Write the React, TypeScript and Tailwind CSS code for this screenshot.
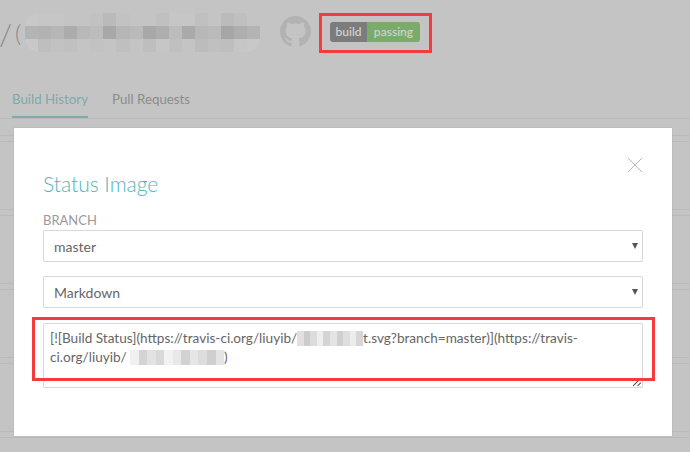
import React from 'react';

const FONT = "font-['Lato','Open_Sans',sans-serif]";

// pixelated blur over the repo name, one string per row
const HEADER_MOSAIC = [
  ['#c8c8c8', '#c6c6c6', '#c6c6c6', '#c4c4c4', '#c4c4c4', '#c2c2c2', '#bababa', '#c2c2c2', '#c4c4c4', '#c4c4c4', '#c0c0c0', '#c6c6c6', '#c6c6c6', '#c0c0c0', '#c4c4c4', '#bbbbbb', '#c0c0c0', '#c4c4c4'],
  ['#b4b4b4', '#b2b2b2', '#b6b6b6', '#acacac', '#b8b8b8', '#bcbcbc', '#a8a8a8', '#b6b6b6', '#bababa', '#a8a8a8', '#aeaeae', '#bcbcbc', '#aaaaaa', '#b8b8b8', '#bababa', '#a6a6a6', '#aeaeae', '#b4b4b4'],
  ['#c8c8c8', '#bebebe', '#c2c2c2', '#c0c0c0', '#c4c4c4', '#c2c2c2', '#c4c4c4', '#bfbfbf', '#c4c4c4', '#bebebe', '#c6c6c6', '#c0c0c0', '#c4c4c4', '#bcbcbc', '#c0c0c0', '#bebebe', '#c6c6c6', '#c8c8c8'],
];

const INLINE_A = ['#e0e0e0', '#cccccc', '#dcdcdc', '#eeeeee', '#d4d4d4', '#e4e4e4', '#cfcfcf', '#dedede', '#ececec', '#d6d6d6'];
const INLINE_B = ['#f0f0f0', '#d4d4d4', '#e2e2e2', '#d8d8d8', '#f2f2f2', '#e8e8e8', '#d2d2d2', '#e6e6e6', '#dcdcdc', '#cfcfcf', '#e4e4e4'];

const Mosaic = ({ colors, w }: { colors: string[]; w: string }) => (
  <span className={`inline-flex h-[15px] align-[-3px] ${w}`}>
    {colors.map((c, i) => (
      <span key={i} className="flex-1 h-full" style={{ backgroundColor: c }} />
    ))}
  </span>
);

const GithubMark = () => (
  <svg viewBox="0 0 16 16" className="w-[31px] h-[31px] fill-[#b2b2b2]">
    <path d="M8 0C3.58 0 0 3.58 0 8c0 3.54 2.29 6.53 5.47 7.59.4.07.55-.17.55-.38 0-.19-.01-.82-.01-1.49-2.01.37-2.53-.49-2.69-.94-.09-.23-.48-.94-.82-1.13-.28-.15-.68-.52-.01-.53.63-.01 1.08.58 1.23.82.72 1.21 1.87.87 2.33.66.07-.52.28-.87.51-1.07-1.78-.2-3.64-.89-3.64-3.95 0-.87.31-1.59.82-2.15-.08-.2-.36-1.02.08-2.12 0 0 .67-.21 2.2.82.64-.18 1.32-.27 2-.27s1.36.09 2 .27c1.53-1.04 2.2-.82 2.2-.82.44 1.1.16 1.92.08 2.12.51.56.82 1.27.82 2.15 0 3.07-1.87 3.75-3.65 3.95.29.25.54.73.54 1.48 0 1.07-.01 1.93-.01 2.2 0 .21.15.46.55.38A8.01 8.01 0 0 0 16 8c0-4.42-3.58-8-8-8z" />
  </svg>
);

const BranchSelect = ({ value }: { value: string }) => (
  <div className="relative">
    <select
      defaultValue={value}
      className="block w-full h-[32px] appearance-none bg-white border border-[#d8d8d8] rounded-[2px] pl-[10px] text-[14px] text-[#666666] outline-none"
    >
      <option>{value}</option>
    </select>
    <span className="absolute right-[5px] top-[13px] w-0 h-0 border-x-[3px] border-t-[6px] border-x-transparent border-t-[#555555]" />
  </div>
);

export default function App() {
  return (
    <div className={`relative w-[690px] h-[452px] overflow-hidden bg-[#c4c4c4] ${FONT}`}>
      <header className="flex items-center h-[66px] pb-[1px]">
        <span className="text-[30px] font-light text-[#8a8a8a] -ml-[1px] w-[16px] leading-none">/</span>
        <span className="text-[24px] font-light text-[#8a8a8a] w-[10px] leading-none">(</span>
        <div className="w-[235px] h-[39px] rounded-[14px] overflow-hidden flex flex-col">
          {HEADER_MOSAIC.map((row, i) => (
            <div key={i} className="flex flex-1">
              {row.map((c, j) => (
                <span key={j} className="flex-1" style={{ backgroundColor: c }} />
              ))}
            </div>
          ))}
        </div>
        <div className="ml-[20px] -mt-[2px]">
          <GithubMark />
        </div>
        <div className="relative ml-[19px] -mt-[2px] flex h-[20px] w-[90px] rounded-[3px] overflow-hidden text-[12px] leading-[20px] font-semibold text-[#cfcfcf]">
          <span className="w-[37px] bg-[#7c7c7c] text-center">build</span>
          <span className="flex-1 bg-[#7bab6a] text-center">passing</span>
        </div>
      </header>

      <nav className="flex gap-[24px] h-[53px] pl-[12px] pt-[24px] border-b border-[#bababa] text-[13.3px]">
        <span className="h-[28px] border-b-2 border-[#7fa9ab] text-[#7fa9ab]">Build History</span>
        <span className="text-[#8c8c8c]">Pull Requests</span>
      </nav>

      <div className="flex flex-col mt-[16px]">
        {[0, 1, 2, 3, 4].map((i) => (
          <div key={i} className="h-[79px] border-t border-b-0 border-[#bababa] mb-[-5px] pt-[5px]">
            <div className="h-full border-t border-[#bababa]" />
          </div>
        ))}
      </div>

      {/* dialog */}
      <div className="absolute left-[14px] top-[128px] w-[658px] h-[308px] bg-white px-[29px] pt-[44px] shadow-[0_0_2px_rgba(0,0,0,0.1)]">
        <button className="absolute right-[29px] top-[29px] w-[16px] h-[16px]">
          <svg viewBox="0 0 16 16" className="w-[16px] h-[16px] stroke-[#bbbbbb] fill-none">
            <path d="M1 1l14 14M15 1L1 15" />
          </svg>
        </button>
        <h2 className="text-[21px] font-light leading-[24px] text-[#4fb6ba]">Status Image</h2>
        <label className="block mt-[17px] text-[13px] leading-[15px] text-[#9a9a9a]">BRANCH</label>
        <div className="flex flex-col gap-[14px] mt-[2px]">
          <BranchSelect value="master" />
          <BranchSelect value="Markdown" />
        </div>
        <div className="relative mt-[15px] h-[65px] border border-[#d8d8d8] rounded-[2px] pl-[6px] pt-[5px] text-[13.6px] leading-[19px] text-[#666666]">
          <div className="whitespace-nowrap">
            [![Build Status](https://travis-ci.org/liuyib/
            <Mosaic colors={INLINE_A} w="w-[66px]" />
            t.svg?branch=master)](https://travis-
          </div>
          <div className="whitespace-nowrap">
            ci.org/liuyib/ <Mosaic colors={INLINE_B} w="w-[94px]" />)
          </div>
          <svg viewBox="0 0 9 9" className="absolute right-0 bottom-0 w-[10px] h-[10px] stroke-[#555555] fill-none">
            <path d="M1 8l7-7M5 8l3-3" />
          </svg>
        </div>
      </div>

      {/* red annotations */}
      <div className="absolute left-[319px] top-[13px] w-[113px] h-[40px] border-[3px] border-[#f53b3b]" />
      <div className="absolute left-[32px] top-[317px] w-[623px] h-[64px] border-[3px] border-[#f53b3b]" />
    </div>
  );
}
